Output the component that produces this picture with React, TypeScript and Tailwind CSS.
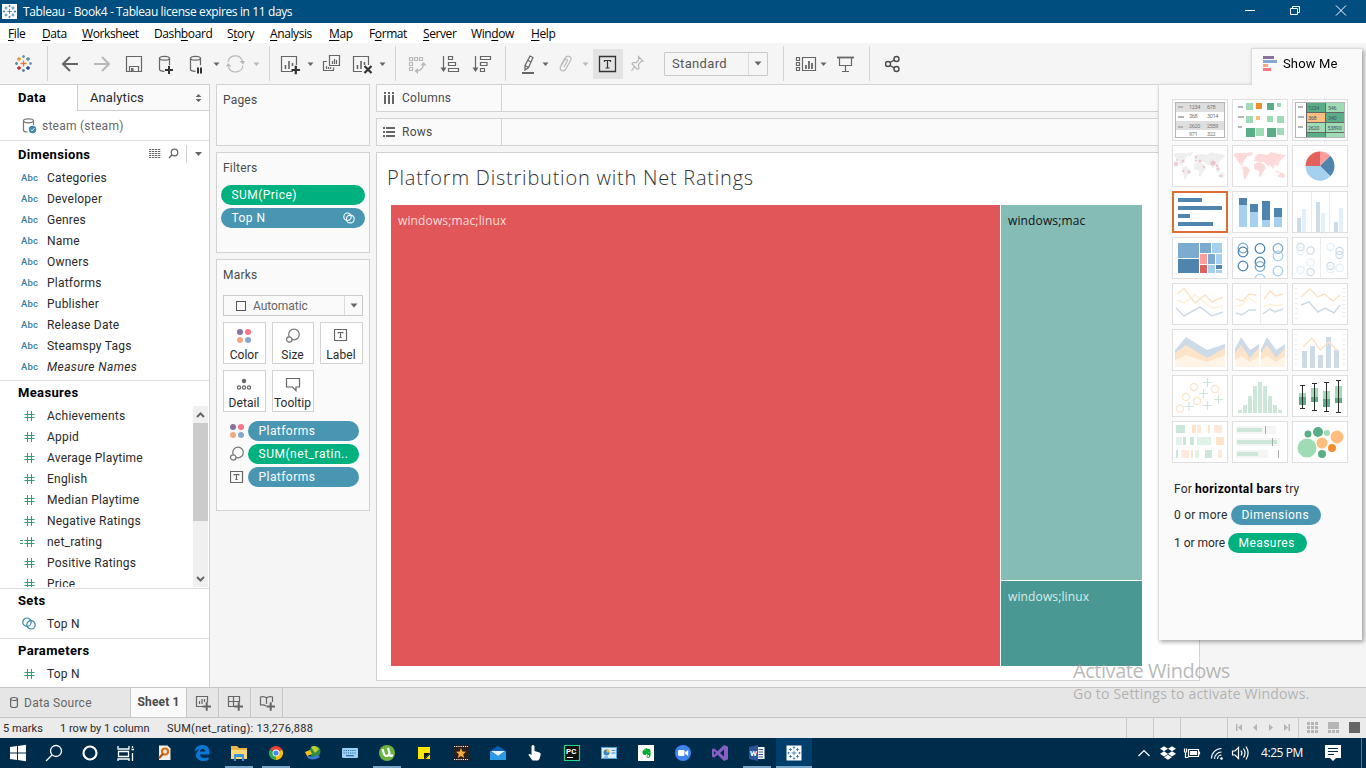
import type { ReactNode } from "react";
import { FaDropbox, FaEvernote } from "react-icons/fa";

type Box = [number, number, number, number];

/* An icon whose shapes are written in window coordinates. */
function Ico({ b, c = "text-[#666]", sw = 1.2, children }: { b: Box; c?: string; sw?: number; children?: ReactNode }) {
  return (
    <svg className={`block shrink-0 ${c}`} width={b[2]} height={b[3]} viewBox={b.join(" ")} fill="none" stroke="currentColor" strokeWidth={sw}>
      {children}
    </svg>
  );
}

const F = { fill: "currentColor", stroke: "none" };

function Caret({ x, y }: { x: number; y: number }) {
  return <path {...F} d={`M${x - 3} ${y - 1.5}h6l-3 3.5z`} />;
}

function TableauMark({ cx, cy, mono }: { cx: number; cy: number; mono?: boolean }) {
  const p: [number, number, number, string][] = [
    [0, 0, 3, "#e8762d"], [0, -7, 1.5, "#7199a6"], [0, 7, 1.5, "#5b879b"], [-7, 0, 1.5, "#5b879b"], [7, 0, 1.5, "#7299bb"],
    [-4.5, -4.5, 2, "#eb912c"], [4.5, -4.5, 2, "#59879b"], [-4.5, 4.5, 2, "#c72035"], [4.5, 4.5, 2, "#1f457e"],
  ];
  return (
    <>
      {p.map(([x, y, r, c], i) => (
        <path key={i} stroke={mono ? "#3a7ba8" : c} strokeWidth={mono ? 1.1 : 1.3} d={`M${cx + x - r} ${cy + y}h${2 * r}M${cx + x} ${cy + y - r}v${2 * r}`} />
      ))}
    </>
  );
}

/* ---------- title bar and menu ---------- */

function TitleBar() {
  return (
    <div className="flex h-[23px] shrink-0 items-center bg-[#004e80] text-white">
      <div className="ml-0.5 h-[15px] w-[15px] bg-white">
        <Ico b={[-7.5, -7.5, 15, 15]}>
          <g transform="scale(.78)"><TableauMark cx={0} cy={0} mono /></g>
        </Ico>
      </div>
      <div className="ml-1.5 font-['Open_Sans',sans-serif] text-[12px] tracking-[-0.38px]">Tableau - Book4 - Tableau license expires in 11 days</div>
      <Ico b={[1240, 0, 126, 23]} c="ml-auto text-white" sw={1}>
        <path d="M1245 10.5h10M1290.5 8.5h7v6h-7zM1292.5 8.5v-2h7v6h-2M1336 5.5l10 10M1346 5.5l-10 10" />
      </Ico>
    </div>
  );
}

function MenuBar() {
  const items: [string, number, string][] = [
    ["File", 0, "w-[34px]"], ["Data", 0, "w-10"], ["Worksheet", 0, "w-[72px]"], ["Dashboard", 4, "w-[73px]"], ["Story", 1, "w-[43px]"],
    ["Analysis", 0, "w-[59px]"], ["Map", 0, "w-10"], ["Format", 1, "w-[54px]"], ["Server", 0, "w-12"], ["Window", 3, "w-[60px]"], ["Help", 0, "w-10"],
  ];
  return (
    <div className="flex h-5 shrink-0 items-center bg-white pl-2 font-['Open_Sans',sans-serif] text-[12px] tracking-[-0.4px] text-black">
      {items.map(([t, k, w]) => (
        <span key={t} className={`${w} pt-0.5`}>
          {t.slice(0, k)}<span className="underline underline-offset-2">{t[k]}</span>{t.slice(k + 1)}
        </span>
      ))}
    </div>
  );
}

/* ---------- toolbar ---------- */

const Sep = () => <div className="h-[35px] w-px shrink-0 bg-[#d4d4d4]" />;

function Toolbar() {
  return (
    <div className="flex h-[41px] shrink-0 items-center bg-[#f5f5f5]">
      <Ico b={[0, 44, 47, 40]}><TableauMark cx={23.5} cy={63.5} /></Ico>
      <Sep />
      <Ico b={[48, 44, 40, 40]} sw={2}><path d="M63 64h15M70 57l-7 7 7 7" /></Ico>
      <Ico b={[88, 44, 30, 40]} c="text-[#b8b8b8]" sw={2}><path d="M94 64h15M102 57l7 7-7 7" /></Ico>
      <Ico b={[118, 44, 32, 40]}>
        <path d="M126.5 56.5h15v15h-15zM129.5 71v-4.5h9V71" /><path {...F} d="M131 68h2.5v3H131z" />
      </Ico>
      <Ico b={[150, 44, 32, 40]}>
        <ellipse cx="164.5" cy="58.3" rx="5" ry="1.9" /><path d="M159.5 58.3v11q0 2 5 2M169.5 58.3v7" />
        <path className="stroke-[#333]" strokeWidth="2" d="M165 70h8M169 66v8" />
      </Ico>
      <Ico b={[182, 44, 39, 40]}>
        <ellipse cx="195.5" cy="58.3" rx="5" ry="1.9" /><path d="M190.5 58.3v11q0 2 5 2M200.5 58.3v7" />
        <path className="stroke-[#333]" strokeWidth="2" d="M198 67.5v6M201 67.5v6" /><Caret x={216.5} y={64} />
      </Ico>
      <Ico b={[221, 44, 48, 40]} c="text-[#b8b8b8]">
        <path d="M228 62a7.5 7.5 0 0 1 14.5-1M243 65.5a7.5 7.5 0 0 1-14.5 1.5" />
        <path {...F} d="M239.5 61h5.5l-2 3.5zM226 66.5h5.5l-3.5-3.5z" /><Caret x={256.5} y={64} />
      </Ico>
      <Sep />
      <Ico b={[270, 44, 50, 40]}>
        <path d="M293 71.5h-11.5v-15h15V65" /><path strokeWidth="1.6" d="M285.5 69v-4M289 69v-8M292.5 66v-3" />
        <path className="stroke-[#333]" strokeWidth="2.2" d="M291.5 70h8.5M295.8 65.7v8.5" /><Caret x={310.5} y={64} />
      </Ico>
      <Ico b={[320, 44, 26, 40]}>
        <path d="M329.5 55.5h10v10h-10zM327 61.5h-3.5v9h10v-3M332.5 64v-3M334.5 64v-5M336.5 64v-4M326.5 69v-3M328.5 69v-2M330.5 69v-2" />
      </Ico>
      <Ico b={[346, 44, 49, 40]}>
        <path d="M362 71.5h-8.5v-15h15V65" /><path strokeWidth="1.6" d="M357.5 69v-4M361 69v-8M364.5 65v-3" />
        <path className="stroke-[#333]" strokeWidth="2.2" d="M364.5 66l7 7M371.5 66l-7 7" /><Caret x={382.5} y={64} />
      </Ico>
      <Sep />
      <Ico b={[396, 44, 37, 40]} c="text-[#b8b8b8]">
        <path d="M409.5 57.5h3v3h-3zM414.5 57.5h3v3h-3zM419.5 57.5h3v3h-3zM409.5 62.5h3v3h-3zM409.5 67.5h3v3h-3zM423.5 63.5q0 7-7 7.5" />
        <path {...F} d="M420.5 65.5l3-3.5 3 3.5zM418 68v6l-3.5-3z" />
      </Ico>
      <Ico b={[433, 44, 32, 40]}>
        <path d="M443.5 56v14M448.5 56.5h4v3h-4zM448.5 62.5h7v3h-7zM448.5 68.5h10v3h-10z" /><path {...F} d="M440.5 67.5h6l-3 4.5z" />
      </Ico>
      <Ico b={[465, 44, 40, 40]}>
        <path d="M475.5 56v14M480.5 56.5h10v3h-10zM480.5 62.5h6.5v3h-6.5zM480.5 68.5h4v3h-4z" /><path {...F} d="M472.5 67.5h6l-3 4.5z" />
      </Ico>
      <Sep />
      <Ico b={[506, 44, 50, 40]}>
        <path d="M530 56l3 1.5-4.5 10-3.5 2.5v-4.5zM525 65.5l3.5 2M528 60.5l3.3 1.5" />
        <path strokeWidth="2" d="M522 73h12" /><Caret x={545.5} y={64} />
      </Ico>
      <Ico b={[556, 44, 37, 40]} c="text-[#b8b8b8]">
        <path d="M561 65l4-7q2-2.5 4.5-1.5t1 4l-5 9q-2 2-4 1t-1-3.5l4-7q1.5-1.5 2.5-.5t0 2l-3 5.5" /><Caret x={585.5} y={64} />
      </Ico>
      <div className="flex h-[30px] w-[30px] items-center bg-[#e3e3e3] pl-[5px]">
        <Ico b={[598, 55, 19, 18]} c="text-[#333]">
          <path strokeWidth="1.3" d="M599.5 56.5h16v15h-16z" /><path d="M604.5 62v-1.5h6V62M607.5 60.5v7.5M605.5 68h4" />
        </Ico>
      </div>
      <Ico b={[623, 44, 41, 40]} c="text-[#b8b8b8]">
        <path d="M638.5 56.5l4.5 4.5-1.8.3-2.7 3.2.5 4-1.5 1-5.5-5.5 1-1.5 3.5.2 2.2-3.2zM634.5 66.5l-3 4.5" />
      </Ico>
      <div className="flex h-6 w-[104px] items-center rounded-[1px] border border-[#c9c9c9] text-[13px] tracking-[0.35px] text-[#555]">
        <span className="flex-1 pl-[7px]">Standard</span>
        <span className="flex h-full w-[19px] items-center justify-center border-l border-[#dcdcdc]">
          <Ico b={[0, 0, 8, 5]}><path {...F} d="M.5.5h7l-3.5 4z" /></Ico>
        </span>
      </div>
      <div className="w-[15px]" />
      <Sep />
      <Ico b={[784, 44, 46, 40]}>
        <path d="M802.5 57.5h13v13h-13zM796.5 57.5h3v3h-3zM796.5 62.5h3v3h-3zM796.5 67.5h3v3h-3z" />
        <path strokeWidth="1.8" d="M806 69v-4M809 69v-8M812 69v-6" /><Caret x={823.5} y={64} />
      </Ico>
      <Ico b={[830, 44, 39, 40]}>
        <path strokeWidth="1.8" d="M837 57.5h17" /><path d="M839.5 58v7.5h12V58M845.5 65.5v6M842 71.5h7" />
      </Ico>
      <Sep />
      <Ico b={[870, 44, 40, 40]} c="text-[#4a4a4a]" sw={1.4}>
        <circle cx="888" cy="64" r="2.5" /><circle cx="896.5" cy="59" r="2.5" /><circle cx="896.5" cy="69" r="2.5" />
        <path d="M890 62.5l4.2-2.3M890 65.5l4.2 2.3" />
      </Ico>
    </div>
  );
}

/* ---------- data pane ---------- */

const SetIcon = () => (
  <svg className="block" width="14" height="13" viewBox="0 0 14 13" fill="none" stroke="currentColor" strokeWidth="1.2">
    <circle cx="5" cy="5.2" r="4.2" /><circle cx="9" cy="7.8" r="4.2" />
  </svg>
);

const Hash = ({ calc }: { calc?: boolean }) => (
  <Ico b={[-4, 0, 15, 10]} c="text-[#2f9e6f]" sw={1}>
    <path d="M3.5 0v10M7.5 0v10M.5 3.5h10M.5 6.5h10" />
    {calc && <path d="M-4 3.5h3M-4 6.5h3" />}
  </Ico>
);

function Field({ icon, name, italic }: { icon: ReactNode; name: string; italic?: boolean }) {
  return (
    <div className="flex h-[21px] shrink-0 items-center">
      <span className="flex w-[47px] items-center pl-5">{icon}</span>
      <span className={italic ? "italic tracking-[0.4px]" : ""}>{name}</span>
    </div>
  );
}

const Head = ({ children }: { children: ReactNode }) => (
  <div className="text-[13px] font-bold tracking-[0.35px] text-black">{children}</div>
);

function DataPane() {
  const dims = ["Categories", "Developer", "Genres", "Name", "Owners", "Platforms", "Publisher", "Release Date", "Steamspy Tags", "Measure Names"];
  const meas = ["Achievements", "Appid", "Average Playtime", "English", "Median Playtime", "Negative Ratings", "net_rating", "Positive Ratings", "Price"];
  const abc = <span className="pt-0.5 pl-px text-[9.5px] font-medium text-[#3a7f9e]">Abc</span>;
  return (
    <div className="flex w-[210px] shrink-0 flex-col border-t border-r border-[#cfcfcf] bg-white text-[12px] tracking-[0.22px] text-[#2a2a2a]">
      <div className="flex h-[26px] shrink-0 text-[13px]">
        <div className="flex w-[77px] items-center pl-[18px] font-bold tracking-[0.35px] text-black">Data</div>
        <div className="flex flex-1 items-center justify-between border-b border-l border-[#cfcfcf] bg-[#fafafa] pr-[7px] pl-3 text-[#2a2a2a]">
          <span className="tracking-[0.1px]">Analytics</span>
          <Ico b={[0, 0, 7, 8]}><path {...F} d="M.5 3h6l-3-3zM.5 5h6l-3 3z" /></Ico>
        </div>
      </div>
      <div className="flex h-[30px] shrink-0 items-center border-b border-[#dedede] text-[#666]">
        <Ico b={[0, 0, 42, 18]} c="text-[#777]">
          <ellipse cx="28.5" cy="3.8" rx="5" ry="2" /><path d="M23.5 4v9q0 2 4 2M33.5 4v4" />
          <circle cx="32.5" cy="12.5" r="3.7" fill="#3a87a8" stroke="none" /><path stroke="#fff" strokeWidth="1" d="M30.8 12.5l1.3 1.4 2.3-2.8" />
        </Ico>
        <span className="tracking-[0.25px]">steam (steam)</span>
      </div>
      <div className="flex h-[26px] shrink-0 items-center justify-between pl-[18px]">
        <div className="pt-px"><Head>Dimensions</Head></div>
        <Ico b={[146, 141, 63, 26]}>
          <path strokeDasharray="2.3 .7" d="M149 149.5h12M149 151.5h12M149 153.5h12M149 155.5h12M149 157.5h12" />
          <circle cx="174.5" cy="152.5" r="3.3" /><path strokeWidth="1.5" d="M172 155l-3 3" />
          <path stroke="#d0d0d0" strokeWidth="1" d="M186.5 145v18" /><path {...F} d="M195 152h7l-3.5 4z" />
        </Ico>
      </div>
      <div className="h-[214px] shrink-0 border-b border-[#dedede]">
        {dims.map((d) => <Field key={d} icon={abc} name={d} italic={d === "Measure Names"} />)}
      </div>
      <div className="flex h-6 shrink-0 items-center pl-[18px]"><Head>Measures</Head></div>
      <div className="flex h-[184px] shrink-0 overflow-hidden border-b border-[#dedede]">
        <div className="flex h-[182px] w-[193px] flex-col overflow-hidden">
          {meas.map((m) => <Field key={m} icon={<Hash calc={m === "net_rating"} />} name={m} />)}
        </div>
        <div className="mt-px flex h-[181px] w-[15px] flex-col items-center justify-between bg-[#f0f0f0]">
          <Ico b={[0, 0, 15, 17]} sw={2}><path d="M4 11l3.5-3.5L11 11" /></Ico>
          <div className="mb-auto h-[98px] w-full bg-[#cbcbcb]" />
          <Ico b={[0, 0, 15, 17]} sw={2}><path d="M4 7l3.5 3.5L11 7" /></Ico>
        </div>
      </div>
      <div className="flex h-6 shrink-0 items-center pl-[18px]"><Head>Sets</Head></div>
      <div className="h-[26px] shrink-0 border-b border-[#dedede]">
        <Field icon={<span className="ml-0.5 text-[#3a87a8]"><SetIcon /></span>} name="Top N" />
      </div>
      <div className="flex h-6 shrink-0 items-center pl-[18px]"><Head>Parameters</Head></div>
      <Field icon={<Hash />} name="Top N" />
    </div>
  );
}

/* ---------- cards ---------- */

const Dots = () => (
  <svg className="block" width="16" height="16" viewBox="0 0 16 16">
    <circle cx="4" cy="4" r="3" fill="#87739b" /><circle cx="12" cy="4" r="3" fill="#fb7485" />
    <circle cx="4" cy="12" r="3" fill="#f3a97d" /><circle cx="12" cy="12" r="3" fill="#85a7d0" />
  </svg>
);
const SizeIcon = () => (
  <Ico b={[0, 0, 16, 16]} c="text-[#777]"><circle cx="9" cy="6.5" r="5.3" /><circle cx="4.3" cy="11.5" r="2.7" fill="#fafafa" /></Ico>
);
const LabelIcon = () => (
  <Ico b={[0, 0, 14, 14]}><path d="M.5 1.5h12v11h-12zM4.2 5.5v-1h4.6v1M6.5 4.5v5M5.3 9.5h2.4" /></Ico>
);
const DetailIcon = () => (
  <Ico b={[0, 0, 16, 16]}><circle {...F} cx="8" cy="5" r="2.2" /><circle cx="3" cy="11.5" r="1.6" /><circle cx="8" cy="11.5" r="1.6" /><circle cx="13" cy="11.5" r="1.6" /></Ico>
);
const TipIcon = () => (
  <Ico b={[0, 0, 16, 16]}><path d="M1.5 2.5h13v8.5h-3.5v3.5l-3.5-3.5h-6z" /></Ico>
);

function Pill({ color, children, cls = "" }: { color: "g" | "b"; children: ReactNode; cls?: string }) {
  return (
    <div className={`flex h-5 items-center rounded-full pl-[10.5px] text-[12px] tracking-[0.45px] text-white ${color === "g" ? "bg-[#00b180]" : "bg-[#4996b2]"} ${cls}`}>{children}</div>
  );
}

function Cards() {
  const card = "shrink-0 border border-[#d2d2d2] bg-[#fafafa]";
  const btns: [string, ReactNode][] = [["Color", <Dots />], ["Size", <SizeIcon />], ["Label", <LabelIcon />], ["Detail", <DetailIcon />], ["Tooltip", <TipIcon />]];
  const rows: [ReactNode, "g" | "b", string][] = [[<Dots />, "b", "Platforms"], [<SizeIcon />, "g", "SUM(net_ratin.."], [<LabelIcon />, "b", "Platforms"]];
  return (
    <div className="ml-1.5 flex w-[154px] shrink-0 flex-col gap-1.5 text-[12px] tracking-[0.2px] text-[#4a4a4a]">
      <div className={`${card} h-[62px] px-1.5 pt-1.5`}>Pages</div>
      <div className={`${card} h-[101px] px-1 pt-1.5`}>
        <div className="pl-0.5">Filters</div>
        <Pill color="g" cls="mt-2">SUM(Price)</Pill>
        <Pill color="b" cls="mt-[3px] justify-between pr-2.5">Top N <svg className="block" width="12" height="12" viewBox="0 0 12 12" fill="none" stroke="currentColor" strokeWidth="1.1"><circle cx="4.5" cy="4.7" r="3.7" /><circle cx="7.3" cy="7" r="3.9" /></svg></Pill>
      </div>
      <div className={`${card} h-[252px] px-1.5 pt-1.5`}>
        Marks
        <div className="mt-[11px] flex h-[21px] items-center border border-[#c9c9c9] text-[#666]">
          <span className="ml-3 h-2.5 w-2.5 border border-[#555]" />
          <span className="ml-[7px] flex-1 tracking-[-0.05px]">Automatic</span>
          <span className="flex h-full w-[18px] items-center justify-center border-l border-[#dcdcdc]"><Ico b={[0, 0, 8, 5]}><path {...F} d="M.5.5h7l-3.5 4z" /></Ico></span>
        </div>
        <div className="mt-1.5 grid grid-cols-[43px_42px_43px] gap-x-1.5 gap-y-[6px]">
          {btns.map(([t, i]) => (
            <div key={t} className="flex h-[42px] flex-col items-center border border-[#d2d2d2] bg-white pt-[5px] text-[#2a2a2a]">
              <span className="pr-px">{i}</span>
              <span className="mt-auto -mb-px pr-px tracking-[0.05px] whitespace-nowrap">{t}</span>
            </div>
          ))}
        </div>
        <div className="mt-[9px] flex flex-col gap-[3px]">
          {rows.map(([i, c, t], k) => (
            <div key={k} className="flex items-center">
              <span className="flex w-[25px] justify-center pl-[3px]">{i}</span>
              <Pill color={c} cls="w-[111px] whitespace-nowrap">{k === 1 ? <span className="tracking-[0.53px]">{t}</span> : t}</Pill>
            </div>
          ))}
        </div>
      </div>
    </div>
  );
}

/* ---------- worksheet ---------- */

function Shelf({ label, icon }: { label: string; icon: ReactNode }) {
  return (
    <div className="flex h-7 shrink-0 border border-[#d2d2d2] bg-[#fafafa]">
      <div className="flex w-[125px] items-center border-r border-[#d2d2d2] text-[12px] tracking-[0.25px] text-[#4a4a4a]">{icon}{label}</div>
    </div>
  );
}

function Sheet() {
  return (
    <div className="ml-1.5 flex w-[824px] shrink-0 flex-col gap-1.5">
      <Shelf label="Columns" icon={<Ico b={[377, 84, 25, 26]}><path {...F} d="M384 91h2v2h-2zM388 91h2v2h-2zM392 91h2v2h-2zM384 94h2v9h-2zM388 94h2v9h-2zM392 94h2v9h-2z" /></Ico>} />
      <Shelf label="Rows" icon={<Ico b={[377, 119, 25, 26]}><path {...F} d="M383 127h2v2h-2zM383 131h2v2h-2zM383 135h2v2h-2zM386 127h9v2h-9zM386 131h9v2h-9zM386 135h9v2h-9z" /></Ico>} />
      <div className="flex h-[529px] flex-col border border-[#d2d2d2] bg-white">
        <div className="flex h-[52px] items-center pb-0.5 pl-2.5 font-['Open_Sans',sans-serif] text-[20px] font-light tracking-[0.77px] whitespace-nowrap text-[#333]">Platform Distribution with Net Ratings</div>
        <div className="ml-3.5 flex h-[461px] w-[751px] gap-px font-['Open_Sans',sans-serif] text-[12px] tracking-[0.13px]">
          <div className="w-[609px] bg-[#e15759] pt-[7px] pl-[7px] text-[#fbdcdc]">windows;mac;linux</div>
          <div className="flex flex-1 flex-col gap-px">
            <div className="h-[375px] bg-[#86bcb6] pt-[7px] pl-[7px] text-[#111]">windows;mac</div>
            <div className="flex-1 bg-[#499894] pt-[7px] pl-[7px] text-[#d9ecea]">windows;linux</div>
          </div>
        </div>
      </div>
    </div>
  );
}

/* ---------- Show Me ---------- */

const G1 = "#9fdcb5", G2 = "#59ad87", O1 = "#ffbe7d", O2 = "#f28e2b", B1 = "#a5d0f0", B2 = "#4f84ae", BM = "#7daacf";
const PB = "#cddbe9", PL = "#e2f0fc", PO = "#fde3c8", PY = "#fff1d8", PG = "#cde6da", PG2 = "#e0f3e8";

const R = ({ d }: { d: [number, number, number, number, string][] }) => (
  <>{d.map(([x, y, w, h, f], i) => <rect key={i} x={x} y={y} width={w} height={h} fill={f} />)}</>
);
const L = ({ d, s }: { d: string; s: string }) => <polyline points={d} fill="none" stroke={s} strokeWidth="1.5" />;
const C = ({ d, r, w }: { d: [number, number, string][]; r: number; w: number }) => (
  <>{d.map(([x, y, s], i) => <circle key={i} cx={x} cy={y} r={r} fill="none" stroke={s} strokeWidth={w} />)}</>
);
const World = () => (
  <path d="M2 9l3-1 8 0 4 1-3 4-2 3-1 2-1 1 3 3-4-2-3-3-2-4-2-2zM15 8l6-1-1 3-3 2zM10 22l4-1 4 4-3 6-2 4-1-1-1-7zM22 16l1-4 3-3 4 0 5 1 4-3 8 2 7 1-3 3-4 4-1 4-3-1-2 4-3-4-2 1-4-4-4 0zM22 19l5-2 5 2 2 4-3 4-2 5-2-1v-5l-5-2zM46 30l4-3 3 3-1 3-6-1zM42 24l3 2 4 1-3 1z" />
);
const areas: [string, string][] = [
  [PB, "3,21 14,8 35,21 53,15 53,38 3,38"], [PO, "3,24 14,16 35,29 53,19 53,38 3,38"], ["#fff4e6", "3,31 14,26 35,33 53,26 53,38 3,38"],
];
const areas2: [string, string][] = [
  [PB, "3,20 9,8 18,21 27,15 27,38 3,38"], [PO, "3,24 9,16 18,29 27,19 27,38 3,38"], ["#fff4e6", "3,31 9,27 18,33 27,27 27,38 3,38"],
];
const tiny = { fontSize: 5.5, letterSpacing: -0.3 };

const thumbs: ReactNode[] = [
  <>
    <R d={[[3, 3, 50, 10, "#dedede"], [3, 22, 50, 9, "#dedede"], [6, 7, 5, 2, "#b5b5b5"], [6, 17, 6, 2, "#b5b5b5"], [6, 27, 5, 2, "#b5b5b5"]]} />
    <rect x="3.5" y="3.5" width="49" height="35" fill="none" stroke="#b5b5b5" />
    <g {...tiny} fill="#777"><text x="17" y="10">1234</text><text x="35" y="10">678</text><text x="17" y="19">368</text><text x="35" y="19">3014</text><text x="17" y="28.5">2620</text><text x="35" y="28.5">2559</text><text x="17" y="36.5">971</text><text x="35" y="36.5">322</text></g>
  </>,
  <R d={[[6, 7, 5, 2, "#b5b5b5"], [6, 17, 6, 2, "#b5b5b5"], [6, 27, 4, 2, "#b5b5b5"], [14, 4, 7, 7, G1], [24, 4, 6, 6, O2], [35, 4, 7, 7, G2], [45, 4, 4, 4, G1], [14, 17, 7, 7, G1], [24, 17, 4, 4, O1], [35, 17, 6, 6, G1], [45, 17, 7, 7, G1], [14, 29, 9, 9, G2], [24, 29, 8, 8, G1], [35, 29, 9, 9, G2], [45, 29, 7, 7, G1]]} />,
  <>
    <R d={[[14, 4, 19, 9, G2], [34, 4, 18, 9, G1], [14, 14, 19, 9, O1], [34, 14, 18, 9, G2], [14, 24, 19, 9, G1], [34, 24, 18, 9, G1], [14, 34, 19, 4, G2], [34, 34, 18, 4, G1], [6, 7, 5, 2, "#b5b5b5"], [6, 17, 6, 2, "#b5b5b5"], [6, 27, 5, 2, "#b5b5b5"]]} />
    <path stroke="#666" d="M14 13.5h39M14 23.5h39M14 33.5h39M33.5 4v34M14.5 4v34" />
    <rect x="3.5" y="3.5" width="49" height="35" fill="none" stroke="#b5b5b5" />
    <g {...tiny} fill="#456"><text x="16" y="10.5">1234</text><text x="36" y="10.5">546</text><text x="16" y="20.5">368</text><text x="36" y="20.5">340</text><text x="16" y="30.5">2620</text><text x="35.5" y="30.5">53890</text></g>
  </>,
  <>
    <g fill="#efefef"><World /></g>
    <g fill="#e9b8c0" opacity=".7">{[[4, 19, 2.3], [11, 16, 1.6], [5, 15, 1], [11, 26, 1.2], [17, 27, 1.7], [24, 12, 1.4], [28, 16, 1.6], [24, 16, 1], [41, 18, 2.6], [46, 24, 1.8], [49, 31, 1.3], [32, 22, 1.2], [45, 21, 1.5]].map(([x, y, r], i) => <circle key={i} cx={x} cy={y} r={r} />)}</g>
  </>,
  <g fill="#fddada"><World /></g>,
  <>
    <path fill="#e1625a" d="M28 21H13.5A14.5 14.5 0 0 1 28 6.5z" /><path fill="#ff9d9a" d="M28 21V6.5a14.5 14.5 0 0 1 10.25 4.25z" />
    <path fill={B2} d="M28 21l10.25-10.25a14.5 14.5 0 0 1 0 20.5z" /><path fill={B1} d="M28 21l10.25 10.25A14.5 14.5 0 0 1 13.5 21z" />
  </>,
  <R d={[[6, 7, 24, 4, B2], [6, 15, 44, 4, B2], [6, 23, 12, 4, B2], [6, 31, 35, 4, B2]]} />,
  <R d={[[7, 7, 8, 7, B2], [7, 14, 8, 22, B1], [18, 13, 8, 8, B2], [18, 21, 8, 15, B1], [30, 10, 8, 19, B2], [30, 29, 8, 7, B1], [42, 17, 8, 9, B2], [42, 26, 8, 10, B1]]} />,
  <R d={[[19, 1, 1, 40, "#ebebeb"], [37, 1, 1, 40, "#ebebeb"], [5, 27, 4, 14, PB], [10, 18, 4, 23, PL], [24, 11, 4, 30, PB], [29, 22, 4, 19, PL], [42, 31, 4, 10, PB], [47, 17, 4, 24, PL]]} />,
  <R d={[[6, 6, 21, 15, BM], [6, 22, 21, 14, B2], [28, 6, 11, 10, BM], [40, 6, 10, 10, B1], [28, 17, 7, 10, "#ff9d9a"], [36, 17, 7, 10, BM], [44, 17, 6, 10, B1], [28, 28, 7, 8, "#e15f59"], [36, 28, 7, 8, B1], [44, 28, 6, 4, B2], [44, 33, 6, 3, B1]]} />,
  <C r={4.8} w={1.3} d={[[11, 11, BM], [11, 15, B2], [11, 29, B2], [28, 11.5, B2], [28, 25, B2], [28, 29.5, BM], [28, 42, B1], [46, 11.5, BM], [46, 19, B1], [46, 34, B1]]} />,
  <>
    <rect x="28" y="1" width="1" height="40" fill="#ebebeb" />
    <C r={3.6} w={1.2} d={[[8.5, 10, PB], [8.5, 14, PL], [8.5, 33, PL], [18.5, 13.5, PB], [18.5, 25.5, PL], [18.5, 35, PB], [38.5, 10, PL], [38.5, 29, PB], [38.5, 32, PL], [47.5, 14, PB], [47.5, 18, PB], [47.5, 31, PL]]} />
  </>,
  <><L s={PY} d="5,17 12,20 23,12 40,25 51,23" /><L s={PO} d="5,11 12,5.5 23,20 33,12 40,19 51,14" /><L s={PB} d="4,25 12,33 28,24 40,33 51,29" /></>,
  <>
    <rect x="28" y="1" width="1" height="40" fill="#ebebeb" />
    <L s={PO} d="4,16 11,18 17,11 24,12" /><L s={PY} d="4,23 10,22 17,15 24,20" /><L s={PB} d="4,30 10,32 17,27 24,27" />
    <L s={PO} d="32,16 38,8 44,13 51,11" /><L s={PY} d="31,24 38,21 44,23 51,21" /><L s={PB} d="31,31 38,26 43,29 51,26" />
  </>,
  <><path stroke="#ebebeb" strokeWidth="3" strokeDasharray="1 4" d="M4 5v32" /><path stroke="#ebebeb" strokeWidth="3" strokeDasharray="1 3" d="M52 5v32" /><L s={PO} d="9,14 18,6 26,14 32,11 41,18 48,12" /><L s={PB} d="9,22 17,19 26,29 33,25 42,30 48,22" /></>,
  <>{areas.map(([f, p]) => <polygon key={f} fill={f} points={p} />)}</>,
  <>{[0, 26].map((x) => <g key={x} transform={`translate(${x} 0)`}>{areas2.map(([f, p]) => <polygon key={f} fill={f} points={p} />)}</g>)}</>,
  <><path stroke="#ebebeb" strokeWidth="3" strokeDasharray="1 4" d="M4 5v32M52 5v32" /><R d={[[10, 22, 5, 17, PB], [18, 17, 5, 22, PB], [26, 26, 5, 13, PB], [34, 8, 5, 31, PB], [42, 21, 5, 18, PB]]} /><L s={PO} d="11,18 20,9 28,21 37,13 46,22" /></>,
  <>
    <C r={3.6} w={1.2} d={[[8, 33.5, PO], [14, 22, PO], [22, 12, PO], [25, 26, PO], [43, 14, PO]]} />
    <path stroke={PG} strokeWidth="1.2" d="M12.5 31.5h9M17 27v9M27 18.5h9M31.5 14v9M31 7.5h9M35.5 3v9M31 30.5h9M35.5 26v9M42 24.5h9M46.5 20v9" />
  </>,
  <R d={[[6, 35, 4, 3, PG], [11, 30, 4, 8, PG], [16, 21, 4, 17, PG], [21, 11, 4, 27, PG], [26, 7, 4, 31, PG], [31, 11, 4, 27, PG], [36, 21, 4, 17, PG], [41, 30, 4, 8, PG], [46, 35, 4, 3, PG]]} />,
  <>
    <R d={[[7, 18, 7, 4, G1], [7, 22, 7, 8, G2], [19, 13, 7, 9, G1], [19, 22, 7, 5, G2], [31, 16, 7, 8, G1], [31, 24, 7, 8, G2], [43, 11, 7, 12, G1], [43, 23, 7, 5, G2]]} />
    <path stroke="#2b2b2b" d="M10.5 10v23M8 10.5h5M8 33.5h5M22.5 8v27M20 8.5h5M20 35.5h5M34.5 7v29M32 7.5h5M32 36.5h5M46.5 5v32M44 5.5h5M44 37.5h5" />
  </>,
  <R d={[[4, 4, 9, 8, PG], [20, 4, 4, 8, PO], [25, 4, 4, 8, "#feeadb"], [36, 4, 2, 8, PO], [42, 4, 8, 8, "#feeadb"], [4, 16, 6, 8, PG2], [11, 16, 3, 8, PG], [18, 16, 4, 8, PG], [25, 16, 14, 8, PG2], [44, 16, 8, 8, PO], [4, 29, 2, 8, PG], [9, 29, 8, 8, "#feeadb"], [19, 29, 2, 8, PO], [23, 29, 4, 8, PG2], [33, 29, 7, 8, PG], [46, 29, 4, 8, "#feeadb"]]} />,
  <R d={[[4, 5, 40, 8, "#f5f5f5"], [4, 17, 44, 8, "#f5f5f5"], [4, 29, 32, 8, "#f5f5f5"], [5, 7, 25, 4, PG], [5, 19, 40, 4, PG], [5, 31, 21, 4, PG], [33, 5, 1, 8, "#aaa"], [40, 17, 1, 8, "#aaa"], [46, 29, 1, 8, "#aaa"]]} />,
  <>{([[15, 27, 9.5, G1], [16, 13, 3.5, G2], [26, 11, 5, G2], [35, 12, 3, G1], [45, 16, 6.5, O1], [30, 22, 5.5, O1], [40, 27, 4, O2], [30, 33, 4, G2]] as [number, number, number, string][]).map(([x, y, r, f], i) => <circle key={i} cx={x} cy={y} r={r} fill={f} />)}</>,
];

function ShowMe() {
  return (
    <div className="absolute top-12 left-[1158px] w-[204px] text-[12px] tracking-[0.15px] text-[#2a2a2a] drop-shadow-[2px_2px_2px_rgba(0,0,0,0.35)]">
      <div className="relative z-10 ml-[93px] flex h-[37px] items-center border-t border-l border-[#dcdcdc] bg-[#fafafa] pb-[7px] pl-[11px] text-[13px] text-black">
        <svg width="14" height="15" viewBox="0 0 14 15"><R d={[[0, 0, 11, 3, "#87739b"], [0, 4, 14, 3, "#85a7d0"], [0, 8, 5, 3, "#f3a97d"], [0, 12, 8, 3, "#fb7485"]]} /></svg>
        <span className="ml-1.5">Show Me</span>
      </div>
      <div className="-mt-px h-[556px] border-t border-l border-[#dcdcdc] bg-[#fafafa] pt-3.5 pl-[13px]">
        <div className="grid grid-cols-[56px_56px_56px] gap-1">
          {thumbs.map((t, i) => {
            const on = i === 6;
            return (
              <div key={i} className={`h-[42px] overflow-hidden bg-white ${on ? "border-2 border-[#dc6b36]" : "border border-[#dfdfdf]"}`}>
                <svg className="block h-full w-full" viewBox={on ? "2 2 52 38" : "1 1 54 40"}>{t}</svg>
              </div>
            );
          })}
        </div>
        <div className="mt-[17px] ml-0.5">For <b className="tracking-[0.4px] text-black">horizontal bars</b> try</div>
        <div className="mt-[7px] ml-0.5 flex items-center"><span className="w-[57px] tracking-[0.25px] whitespace-nowrap">0 or more</span><Pill color="b" cls="w-[90px]">Dimensions</Pill></div>
        <div className="mt-2 ml-0.5 flex items-center"><span className="w-[54px] tracking-[-0.02px] whitespace-nowrap">1 or more</span><Pill color="g" cls="w-[79px]">Measures</Pill></div>
      </div>
    </div>
  );
}

/* ---------- bottom bars ---------- */

function SheetTabs() {
  const cell = "border-r border-[#c6c6c6]";
  return (
    <div className="flex h-[31px] shrink-0 border-t border-b border-[#c6c6c6] bg-[#e6e6e6] text-[12px] tracking-[0.25px] text-[#666]">
      <div className={`flex w-[131px] items-center pl-2.5 ${cell}`}>
        <Ico b={[0, 0, 14, 14]}><ellipse cx="4" cy="3" rx="3.5" ry="1.5" /><path d="M.6 3v7q0 1.5 3.4 1.5t3.4-1.5V3" /></Ico>
        <span>Data Source</span>
      </div>
      <div className={`flex w-14 items-center justify-center bg-[#fafafa] pb-0.5 font-bold tracking-[0.15px] text-[#4a4a4a] ${cell}`}>Sheet 1</div>
      <div className={cell}><Ico b={[187, 688, 31, 29]}><path d="M204 706.5h-7.5v-10h11v6M199.5 704v-3M202 704v-5M204.5 702v-3" /><path strokeWidth="2" d="M202.5 706.5h8.5M206.7 702.3v8.5" /></Ico></div>
      <div className={cell}><Ico b={[219, 688, 31, 29]}><path d="M235 706.5h-6.5v-10h11v6M228.5 701.5h11M233.5 696.5v10" /><path strokeWidth="2" d="M234.5 706.5h8.5M238.7 702.3v8.5" /></Ico></div>
      <div className={cell}><Ico b={[251, 688, 31, 29]}><path d="M266 706q-1.5-1.5-5.5-1v-8q4-1 6 1 2-2 6-1v5M266.5 698v6" /><path strokeWidth="2" d="M266.5 706.5h8.5M270.7 702.3v8.5" /></Ico></div>
    </div>
  );
}

function StatusBar() {
  const v = "h-full border-l border-[#c9c9c9]";
  return (
    <div className="flex h-5 shrink-0 items-center bg-[#ebebeb] pl-[3px] text-[11px] tracking-[0.05px] text-[#2a2a2a]">
      <span className="w-[57px] pt-0.5 whitespace-nowrap">5 marks</span>
      <span className="w-[107px] pt-0.5 tracking-[0.02px]">1 row by 1 column</span>
      <span className="pt-0.5 tracking-[0.28px]">SUM(net_rating): 13,276,888</span>
      <span className={`ml-auto w-[27px] ${v}`} /><span className={`w-[27px] ${v}`} /><span className={`w-[47px] ${v}`} />
      <span className={`w-[71px] ${v}`}>
        <Ico b={[1228, 718, 70, 20]} c="text-[#b5b5b5]"><path {...F} d="M1236 724h1.5v7h-1.5zM1242 724v7l-4-3.5zM1257 724v7l-4-3.5zM1269 724v7l4-3.5zM1284 724v7l4-3.5zM1288.5 724h1.5v7h-1.5z" /></Ico>
      </span>
      <span className={`w-[68px] ${v}`}>
        <Ico b={[1299, 718, 67, 20]} c="text-[#b5b5b5]">
          <path {...F} d="M1307 722h3v3h-3zM1311 722h3v3h-3zM1315 722h3v3h-3zM1307 726h3v3h-3zM1311 726h3v3h-3zM1315 726h3v3h-3zM1307 730h3v3h-3zM1311 730h3v3h-3zM1315 730h3v3h-3zM1328 722h11v7h-11zM1328 730h3v3h-3zM1332 730h3v3h-3zM1336 730h3v3h-3z" />
          <path fill="#666" stroke="none" d="M1349 722h11v11h-11z" />
        </Ico>
      </span>
    </div>
  );
}

/* Each app icon is drawn around a 0,0 centre. */
const apps: { w: string; icon: ReactNode; open?: boolean; on?: boolean }[] = [
  { w: "w-9", icon: <path fill="#fff" d="M-8-6l7-1v6.5h-7zM0-7.1l8-1.1v7.7H0zM-8 .5h7V7l-7-1zM0 .5h8v7.7L0 7.1z" /> },
  { w: "w-9", icon: <g fill="none" stroke="#fff" strokeWidth="1.3"><circle cx="2" cy="-2" r="5.5" /><path d="M-2 2l-6 6" /></g> },
  { w: "w-9", icon: <circle r="6.5" fill="none" stroke="#fff" strokeWidth="2.2" /> },
  { w: "w-9", icon: <path fill="none" stroke="#fff" strokeWidth="1.3" d="M-8-7v3H3v-3M-7.5-1.5h10v5h-10zM-8 8V6H3v2M6.5-7v2M6.5 0v8M5.5-3.5h2.5" /> },
  { w: "w-[39px]", icon: <><path fill="#f3efe6" d="M-5-7.5h8.5l3 3V7H-5z" /><circle cx="1" cy="-1.5" r="3" fill="none" stroke="#d8731c" strokeWidth="2.2" /><path stroke="#b25314" strokeWidth="2.2" d="M-1 .8l-4 4.5" /></> },
  { w: "w-[37px]", icon: <path fill="#0a78d6" fillRule="evenodd" d="M-7.5-1.5C-6.5-6-3.5-8 .5-8 5-8 7.5-4.8 7.5-.8V1.5H-2.2C-2 4 0 5 2.5 5 4 5 5.5 4.5 6.5 3.9V7C5 7.7 3.3 8 1.5 8-3 8-6 5.5-6 2-6-.5-4.5-2.5-2-3.8c-2 .2-4 .9-5.5 2.3zM-2-1.5h5.3C3.2-3.3 2.3-4.2.8-4.2-.7-4.2-1.7-3.2-2-1.5z" /> },
  { w: "w-[37px]", open: true, icon: <><path fill="#e9b84b" d="M-8-7h6l2 2h8V6H-8z" /><path fill="#fbd977" d="M-8-3H8v9H-8z" /><path fill="#3b96dd" d="M-5 8V2q0-1 1-1h8q1 0 1 1v6H3V4h-6v4z" /></> },
  { w: "w-[37px]", open: true, icon: <><path fill="#ea4335" d="M0 0l-6.1-3.5A7 7 0 0 1 6.1-3.5z" /><path fill="#fbbc05" d="M0 0l6.1-3.5A7 7 0 0 1 0 7z" /><path fill="#34a853" d="M0 0V7a7 7 0 0 1-6.1-10.5z" /><circle r="3.4" fill="#fff" /><circle r="2.6" fill="#4285f4" /></> },
  { w: "w-[37px]", icon: <><circle cx="2" cy="-1.5" r="5.5" fill="#2f8f3f" /><path fill="#b7d433" d="M-2-6Q2-9 6-4L2 0z" /><path fill="#3a7bd0" d="M-6 2q5 3 11 0l2 2Q-1 9-6 4z" /><path fill="#f4c11a" d="M-8-1l5-2 2 4-5 2z" /></> },
  { w: "w-[37px]", icon: <><rect x="-8" y="-5" width="16" height="10" rx="1" fill="#9fd0f7" /><path stroke="#2468a8" strokeWidth="1.2" strokeDasharray="1.2 1" d="M-6.5-2.5h13M-6.5 0h13" /><path stroke="#2468a8" strokeWidth="1.2" d="M-4 2.7h8" /></> },
  { w: "w-[37px]", open: true, icon: <><circle r="8" fill="#6cb33f" /><path fill="none" stroke="#fff" strokeWidth="2.2" d="M-4.5-4l1.5 5q1.5 3 4 1.5T2-1.5L1-5M2.5 2q2 2 3-.5" /></> },
  { w: "w-[37px]", icon: <><path fill="#ffe600" d="M-6-6H6V0L0 6h-6z" /><path fill="#111" d="M0 6V0h6z" /><path fill="#ffe600" d="M1.5 6L6 1.5V6z" /></> },
  { w: "w-[37px]", icon: <><path fill="#2b2020" d="M-8-8H8V8H-8z" /><path stroke="#fff" strokeDasharray="1.2 1" d="M-7-6.5H7M-7 6.5H7" /><path fill="#f5ab3d" d="M0-5l1.4 3.5L5-1.2 2.2 1.2 3.2 5 0 3l-3.2 2 1-3.8L-5-1.2l3.6-.3z" /></> },
  { w: "w-[37px]", icon: <><path fill="#0a63b8" d="M-8-2l8-5 8 5v9H-8z" /><path fill="#e8f3fb" d="M-7-2H7L0 3z" /><path fill="#2b9be6" d="M-8-2l8 5 8-5v9H-8z" /></> },
  { w: "w-[37px]", icon: <path fill="#fff" d="M-2-8q1.5 0 1.5 1.5V-2L4.5-.5Q6 0 5.7 1.5L4.5 6 3 7.5h-5.5L-6.5 2q0-1.5 1.5-1l1.5 1v-8.5Q-3.5-8-2-8z" /> },
  { w: "w-[37px]", icon: <><path fill="#111" stroke="#21d789" strokeWidth="1.2" d="M-7.5-7.5h15v15h-15z" /><text x="-6" y="1" fontSize="8" fontWeight="700" fill="#fff">PC</text><path stroke="#fff" d="M-5 4.5h6" /></> },
  { w: "w-[37px]", icon: <><path fill="#4aa5e0" d="M-8-6H8V6H-8z" /><path fill="#d9efff" d="M-7-5H7V5H-7z" /><circle cx="-2.5" cy="-.5" r="3" fill="#3286c8" /><path fill="#f4b731" d="M-2.5-.5v-3.5a3.5 3.5 0 0 1 3.5 3.5z" /><path stroke="#4a90c4" d="M2.5-2.5h4M2.5 0h4M-5 4h4" /></> },
  { w: "w-[37px]", icon: <><path fill="#fff" d="M-8-8H8V8H-8z" /><FaEvernote x={-5} y={-5.5} size={11} color="#00a82d" /></> },
  { w: "w-[37px]", icon: <><circle r="8" fill="#3f84f2" /><rect x="-5" y="-3" width="6.5" height="6" rx="1.2" fill="#fff" /><path fill="#fff" d="M2.2-1l3-2v6l-3-2z" /></> },
  { w: "w-[37px]", icon: <path fill="#865fc5" fillRule="evenodd" d="M4-8l4 1.7V6.3L4 8-2.5 1.8-6 4.8-8 3.8v-7.6l2-1 3.5 3zM4-3.5L0 0l4 3.5zM-6-2v4l2-2z" /> },
  { w: "w-[38px]", open: true, icon: <><path fill="#fff" d="M0-6h7.5V6H0z" /><path stroke="#2b579a" d="M1.5-3.5h4.5M1.5-1h4.5M1.5 1.5h4.5M1.5 4h4.5" /><path fill="#2b579a" d="M-8-6L1-8V8L-8 6z" /><text x="-7" y="3" fontSize="8" fontWeight="700" fill="#fff">W</text></> },
  { w: "w-9", on: true, icon: <><path fill="#fff" d="M-7.5-7.5h15v15h-15z" /><g transform="scale(.78)" fill="none"><TableauMark cx={0} cy={0} mono /></g></> },
];

function Taskbar() {
  return (
    <div className="flex h-[30px] shrink-0 bg-[#002c4b] text-white">
      {apps.map((a, i) => (
        <div key={i} className={`flex flex-col items-center ${a.w} ${a.on ? "bg-[#003e6b]" : ""}`}>
          <svg className="mt-1.5 block h-[18px] w-[18px]" viewBox="-9 -9 18 18">{a.icon}</svg>
          {(a.open || a.on) && <div className={`mt-auto h-0.5 bg-[#76a5c8] ${a.on ? "w-full" : "w-7"}`} />}
        </div>
      ))}
      <div className="ml-auto flex w-[230px] items-center">
        <Ico b={[1136, 738, 22, 30]} c="text-white"><path d="M1138.5 756l5.5-5.5 5.5 5.5" /></Ico>
        <FaDropbox className="ml-0.5" size={16} />
        <Ico b={[1176, 738, 84, 30]} c="text-white">
          <path d="M1188.5 749.5h10v7h-10zM1199.5 751.5v3M1184.5 748.5v3q1 2 2 0v-3M1185.5 752.5v5h3" /><path {...F} d="M1190 751h7v4h-7z" />
          <path d="M1211.5 758.5a10 10 0 0 1 10-10M1214.5 759a7 7 0 0 1 7-7M1217.5 759a4 4 0 0 1 4-4" /><circle {...F} cx="1221.5" cy="758.5" r="1.3" />
          <path d="M1232.5 751h2.5l3.5-3.5v11l-3.5-3.5h-2.5zM1241 750.5q1.8 2.5 0 5M1243.5 748.5q3 4.5 0 9M1246 746.5q4.2 6.5 0 13" />
        </Ico>
        <span className="ml-px w-[64px] font-['Open_Sans',sans-serif] text-[12px] tracking-[-0.42px]">4:25 PM</span>
        <Ico b={[1325, 738, 36, 30]}><path fill="#fff" stroke="none" d="M1325 745h16v13h-5l-3 3-3-3h-5z" /><path stroke="#002c4b" d="M1328 748.5h10M1328 751.5h10M1328 754.5h6" /></Ico>
        <div className="h-full w-px bg-[#5a7388]" />
      </div>
    </div>
  );
}

export default function App() {
  return (
    <div className="relative flex h-[768px] w-[1366px] flex-col overflow-hidden bg-[#f5f5f5] font-['Roboto',sans-serif]">
      <TitleBar />
      <MenuBar />
      <Toolbar />
      <div className="flex h-[603px] shrink-0">
        <DataPane />
        <Cards />
        <Sheet />
      </div>
      <SheetTabs />
      <StatusBar />
      <Taskbar />
      <ShowMe />
      <div className="pointer-events-none absolute top-[657px] left-[1073px] font-['Open_Sans',sans-serif] text-[#9a9a9a]/70">
        <div className="text-[20px] leading-[27px] tracking-[-0.45px]">Activate Windows</div>
        <div className="pt-px text-[14px] leading-[18px] tracking-[0.2px]">Go to Settings to activate Windows.</div>
      </div>
    </div>
  );
}
